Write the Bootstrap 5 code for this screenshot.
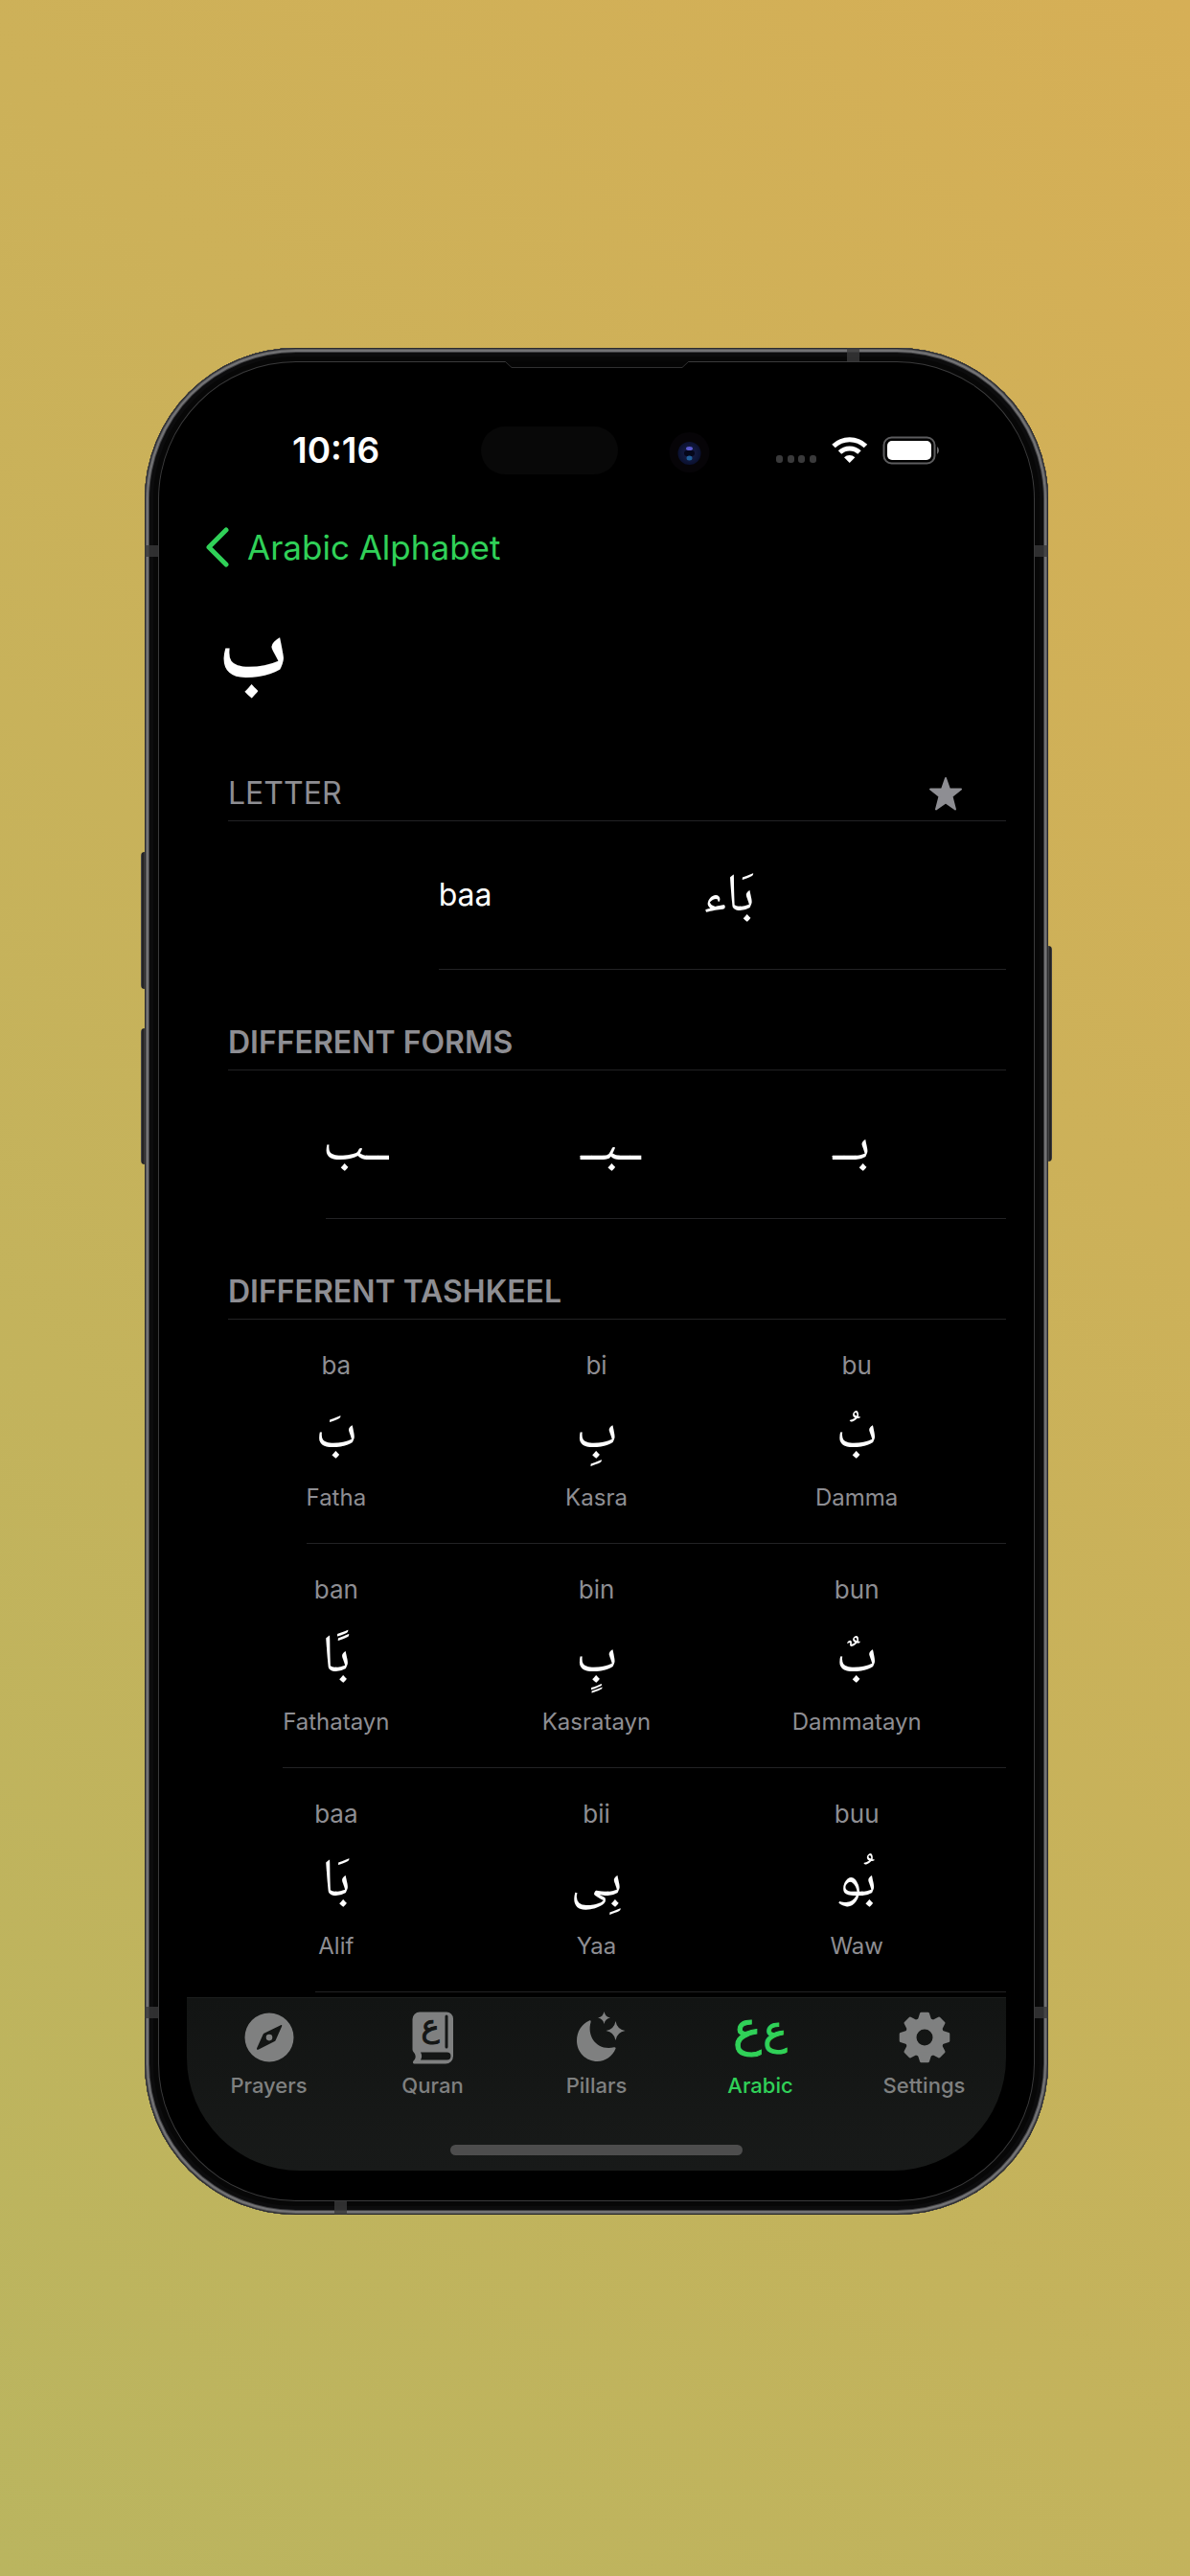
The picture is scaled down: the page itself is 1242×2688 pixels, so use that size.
<!DOCTYPE html>
<html lang="en" data-bs-theme="dark">
<head>
<meta charset="utf-8">
<meta name="viewport" content="width=device-width, initial-scale=1">
<title>Arabic Alphabet</title>
<link href="https://cdn.jsdelivr.net/npm/bootstrap@5.3.0/dist/css/bootstrap.min.css" rel="stylesheet">
<style>
  :root { --accent: #30d158; --muted: #8e8e93; --line: #222224; --tab: #7f8080; }
  body {
    font-family: Inter, "Noto Sans", sans-serif;
    background: linear-gradient(225deg, #d6af56, #bab55f) #c8b25b;
    min-height: 100vh;
  }
  .stage { padding: 363px 148px 377px 151px; }
  .phone {
    background: #000; border-radius: 158px; padding: 45px 44px 46px;
    box-shadow: inset 0 0 0 1px #2b2b2d, inset 0 0 0 2px #58585a, inset 0 0 0 4px #737375, inset 0 0 0 5px #3e3e40, inset 0 0 0 9px #0c0c0d, inset 0 0 0 14px #070707, inset 0 0 0 15px #3a3a3b;
  }
  .side-key { width: 4px; background: linear-gradient(90deg, #555, #151515 50%, #4a4849); }
  .key-up { left: -4px; top: 526px; height: 143px; border-radius: 4px 0 0 4px; }
  .key-down { left: -4px; top: 710px; height: 142px; border-radius: 4px 0 0 4px; }
  .key-power { right: -4px; top: 624px; height: 225px; border-radius: 0 4px 4px 0; }
  .band { background: #3a3a3b; opacity: .8; }
  .band-v { width: 15px; height: 12px; }
  .band-h { width: 13px; height: 14px; }
  .band-upper { top: 206px; }
  .band-lower { top: 1731px; }
  .band-right { left: 733px; }
  .band-left { left: 198px; }
  .speaker { left: 376px; top: 14px; width: 192px; height: 8px; }
  .display { border-radius: 0 0 118px 118px; overflow: hidden; color: #fff; }
  .status { height: 124px; padding: 0 69px 0 110px; }
  .clock { font-size: 37px; line-height: 48px; font-weight: 600; width: 90px; }
  .island { width: 143px; height: 50px; background: #080808; margin-left: 107px; }
  .lens { width: 45px; height: 45px; margin-left: 52px; }
  .topnav { height: 78px; padding: 0 20px; }
  .back { color: var(--accent); font-size: 35px; line-height: 48px; gap: 19px; }
  .arabic { font-family: "Noto Naskh Arabic", "DejaVu Sans", serif; }
  .big-letter { height: 142px; padding: 12px 32px 0; font-size: 94px; line-height: 130px; font-weight: 700; margin: 0; color: #fff; }
  .head { height: 105px; margin-left: 43px; padding: 0 45px 8px 0; border-bottom: 1px solid var(--line); }
  .head-text { font-size: 32px; line-height: 40px; font-weight: 600; margin: 0; color: var(--muted); }
  .head-text.light { font-weight: 400; }
  .star { color: var(--muted); line-height: 0; }
  .pair { height: 154px; padding: 0 43px; }
  .cols { padding: 0 20px; }
  .name { font-size: 32px; line-height: 48px; }
  .word { font-size: 56px; line-height: 98px; padding-top: 8px; }
  .small-cap { color: var(--muted); font-size: 26px; line-height: 32px; }
  .kind { color: var(--muted); font-size: 24px; line-height: 32px; }
  .tash { padding-top: 32px; padding-bottom: 31px; }
  .rule { height: 1px; background: var(--line); }
  .from-letter { margin-left: 263px; }
  .from-forms { margin-left: 145px; }
  .from-fatha { margin-left: 125px; }
  .from-tanwin { margin-left: 100px; }
  .from-alif { margin-left: 134px; }
  .tabs { background: linear-gradient(#121413, #181a19); border-top: 1px solid #1c1e1d; margin-top: 5px; height: 181px; }
  .tab { flex: 1 1 0; color: var(--tab); font-size: 22px; line-height: 30px; font-weight: 500; padding-top: 11px; }
  .tab svg { display: block; margin-bottom: 5px; overflow: visible; }
  .tab.active { color: var(--accent); }
  .home { width: 305px; height: 11px; background: #4d4d4d; }
</style>
</head>
<body>
<main class="stage">
  <div class="phone position-relative">
    <span class="side-key key-up position-absolute"></span>
    <span class="side-key key-down position-absolute"></span>
    <span class="side-key key-power position-absolute"></span>
    <span class="band band-v band-upper position-absolute start-0"></span>
    <span class="band band-v band-upper position-absolute end-0"></span>
    <span class="band band-v band-lower position-absolute start-0"></span>
    <span class="band band-v band-lower position-absolute end-0"></span>
    <span class="band band-h band-right position-absolute top-0"></span>
    <span class="band band-h band-left position-absolute bottom-0"></span>
    <svg class="speaker position-absolute" viewBox="0 0 192 8" aria-hidden="true"><path d="M0 0L7 6.500H185L192 0" fill="#050505" stroke="#303031" stroke-width="1"/></svg>

    <div class="display">
      <div class="status d-flex align-items-center">
        <span class="clock">10:16</span>
        <span class="island rounded-pill"></span>
        <svg class="lens" viewBox="0 0 45 45" aria-hidden="true">
          <defs><radialGradient id="lensGlow"><stop offset="0" stop-color="#1b1f4a"/><stop offset=".7" stop-color="#0f1638"/><stop offset="1" stop-color="#0a1030"/></radialGradient></defs>
          <circle cx="22.500" cy="24" r="21" fill="#060407"/>
          <circle cx="22.500" cy="25" r="12" fill="url(#lensGlow)"/>
          <rect x="17" y="22" width="11" height="6" rx="3" fill="#05071a"/>
          <ellipse cx="22.500" cy="20" rx="3.500" ry="2" fill="#5a5ad0"/>
          <ellipse cx="22.500" cy="30" rx="3" ry="2.500" fill="#1f5f9a"/>
        </svg>
        <svg class="ms-auto" width="171" height="30" viewBox="0 0 171 30" aria-label="Wi-Fi and battery">
          <g fill="#3a3a3b"><rect width="7" height="8" x="0" y="20" rx="3"/><rect width="7" height="8" x="12" y="20" rx="3"/><rect width="7" height="8" x="23" y="20" rx="3"/><rect width="7" height="8" x="35" y="20" rx="3"/></g>
          <g fill="none" stroke="#fff" stroke-width="5">
            <path d="M60 10.500a24 24 0 0 1 33.500 0"/><path d="M66.500 17a15 15 0 0 1 20.500 0"/>
          </g>
          <path d="M76.700 28l-5.700-5.700a8.500 8.500 0 0 1 11.400 0z" fill="#fff"/>
          <rect x="112.500" y="1.500" width="53" height="27" rx="8" fill="none" stroke="#5c5c5e" stroke-width="2"/>
          <rect x="116" y="5" width="46" height="20" rx="5" fill="#fff"/>
          <path d="M168 11a5 5 0 0 1 0 8z" fill="#6a6a6c"/>
        </svg>
      </div>

      <nav class="topnav d-flex align-items-center">
        <a href="#" class="back d-flex align-items-center text-decoration-none">
          <svg width="24" height="42" viewBox="0 0 24 42" fill="none" stroke="currentColor" stroke-width="5" stroke-linecap="round" stroke-linejoin="round" aria-hidden="true"><path d="M21 3L3 21l18 18"/></svg>
          Arabic Alphabet
        </a>
      </nav>

      <h1 class="big-letter arabic" lang="ar">ب</h1>

      <section>
        <div class="head d-flex align-items-end justify-content-between">
          <h2 class="head-text light">LETTER</h2>
          <button type="button" class="star btn p-0 border-0" aria-label="Favourite">
            <svg width="36" height="40" viewBox="0 0 36 40" aria-hidden="true"><path d="M18 4l4 11.500h12L24.500 23l3.500 13.500L18 29.500 8 36.500 11.500 23 2 15.500h12z" fill="currentColor" stroke="currentColor" stroke-width="2" stroke-linejoin="round"/></svg>
          </button>
        </div>
        <div class="pair d-flex justify-content-evenly align-items-center">
          <span class="name">baa</span>
          <span class="word arabic" lang="ar" dir="rtl">بَاء</span>
        </div>
        <div class="rule from-letter"></div>
      </section>

      <section>
        <div class="head d-flex align-items-end"><h2 class="head-text">DIFFERENT FORMS</h2></div>
        <div class="pair d-flex justify-content-around align-items-center arabic" lang="ar">
          <span class="word">ــب</span><span class="word">ــبــ</span><span class="word">بــ</span>
        </div>
        <div class="rule from-forms"></div>
      </section>

      <section>
        <div class="head d-flex align-items-end"><h2 class="head-text">DIFFERENT TASHKEEL</h2></div>
        <div class="cols row g-0 text-center tash">
          <div class="col"><div class="small-cap">ba</div><div class="word arabic" lang="ar">بَ</div><div class="kind">Fatha</div></div>
          <div class="col"><div class="small-cap">bi</div><div class="word arabic" lang="ar">بِ</div><div class="kind">Kasra</div></div>
          <div class="col"><div class="small-cap">bu</div><div class="word arabic" lang="ar">بُ</div><div class="kind">Damma</div></div>
        </div>
        <div class="rule from-fatha"></div>
        <div class="cols row g-0 text-center tash">
          <div class="col"><div class="small-cap">ban</div><div class="word arabic" lang="ar">بًا</div><div class="kind">Fathatayn</div></div>
          <div class="col"><div class="small-cap">bin</div><div class="word arabic" lang="ar">بٍ</div><div class="kind">Kasratayn</div></div>
          <div class="col"><div class="small-cap">bun</div><div class="word arabic" lang="ar">بٌ</div><div class="kind">Dammatayn</div></div>
        </div>
        <div class="rule from-tanwin"></div>
        <div class="cols row g-0 text-center tash">
          <div class="col"><div class="small-cap">baa</div><div class="word arabic" lang="ar">بَا</div><div class="kind">Alif</div></div>
          <div class="col"><div class="small-cap">bii</div><div class="word arabic" lang="ar">بِى</div><div class="kind">Yaa</div></div>
          <div class="col"><div class="small-cap">buu</div><div class="word arabic" lang="ar">بُو</div><div class="kind">Waw</div></div>
        </div>
        <div class="rule from-alif"></div>
      </section>

      <footer class="tabs d-flex flex-column">
        <nav class="d-flex">
          <a href="#" class="tab d-flex flex-column align-items-center text-decoration-none">
            <svg width="60" height="60" viewBox="0 0 60 60" aria-hidden="true"><path fill="currentColor" fill-rule="evenodd" d="M30 4.500a25.500 25.500 0 1 0 0 51 25.500 25.500 0 0 0 0-51zM42 17.200c1-.4 1.600.3 1.100 1.300l-6.300 14.200c-.3.700-.8 1.200-1.500 1.500L18.500 42.700c-1.200.5-1.900-.3-1.400-1.400l6.400-14.200c.3-.7.800-1.200 1.500-1.500zM30 26.800a3.300 3.300 0 1 0 0 6.600 3.300 3.300 0 0 0 0-6.600z"/></svg>
            Prayers</a>
          <a href="#" class="tab d-flex flex-column align-items-center text-decoration-none">
            <svg width="60" height="60" viewBox="0 0 60 60" aria-hidden="true"><path fill="currentColor" d="M16 3.500h28a7 7 0 0 1 7 7v39a8 8 0 0 1-8 8H11c-2.500 0-2.500-2-1-3.500 2.500-2.500 2-6-.2-8.500-.9-1-1.300-2-1.300-3.500v-31a7.500 7.500 0 0 1 7.500-7.500z"/><path d="M44 8v32" stroke="#141615" stroke-width="3" stroke-linecap="round"/><path d="M17 45.500h27.500a4 4 0 0 1 0 8H17c1.500-2.500 1.500-5.500 0-8z" fill="#141615"/><text x="27" y="29" text-anchor="middle" font-family="DejaVu Sans" font-size="32" stroke="#141615" fill="#141615">ع</text></svg>
            Quran</a>
          <a href="#" class="tab d-flex flex-column align-items-center text-decoration-none">
            <svg width="60" height="60" viewBox="0 0 60 60" aria-hidden="true"><g fill="currentColor"><path d="M22 12.500c1-.5 2 .2 1.600 1.400-4.500 15.500 7 30.500 24.400 26.300 1.200-.3 2 .5 1.500 1.600C46.500 49.500 39 55 30.500 55 18.500 55 9 45.500 9 33.500c0-9.500 5-17.500 13-21z"/><path d="M37.500 3q1 5.500 6.500 6.500-5.500 1-6.500 6.500-1-5.500-6.500-6.500 5.500-1 6.500-6.500zM49.500 13q1.500 8.500 10 10-8.500 1.500-10 10-1.500-8.500-10-10 8.500-1.500 10-10z"/></g></svg>
            Pillars</a>
          <a href="#" class="tab active d-flex flex-column align-items-center text-decoration-none">
            <svg width="60" height="60" viewBox="0 0 60 60" fill="currentColor" stroke="currentColor" aria-hidden="true"><text x="16" y="38" text-anchor="middle" font-family="DejaVu Sans" font-size="50">ع</text><text x="45" y="37" text-anchor="middle" font-family="DejaVu Sans" font-size="42">ع</text></svg>
            Arabic</a>
          <a href="#" class="tab d-flex flex-column align-items-center text-decoration-none">
            <svg width="60" height="60" viewBox="0 0 60 60" fill="none" stroke="currentColor" aria-hidden="true"><circle cx="30" cy="30" r="14.500" stroke-width="12"/><g fill="currentColor" stroke-width="3" stroke-linejoin="round"><g id="cog"><path d="M26.500 5.200h7L36 13H24z"/><path d="M26.500 54.800h7L36 47H24z"/><path d="M5.200 26.500v7L13 36V24z"/><path d="M54.800 26.500v7L47 36V24z"/></g><use href="#cog" transform="rotate(45 30 30)"/></g></svg>
            Settings</a>
        </nav>
        <div class="home rounded-pill mx-auto mt-auto mb-3"></div>
      </footer>
    </div>
  </div>
</main>
<script src="https://cdn.jsdelivr.net/npm/bootstrap@5.3.0/dist/js/bootstrap.bundle.min.js"></script>
</body>
</html>
